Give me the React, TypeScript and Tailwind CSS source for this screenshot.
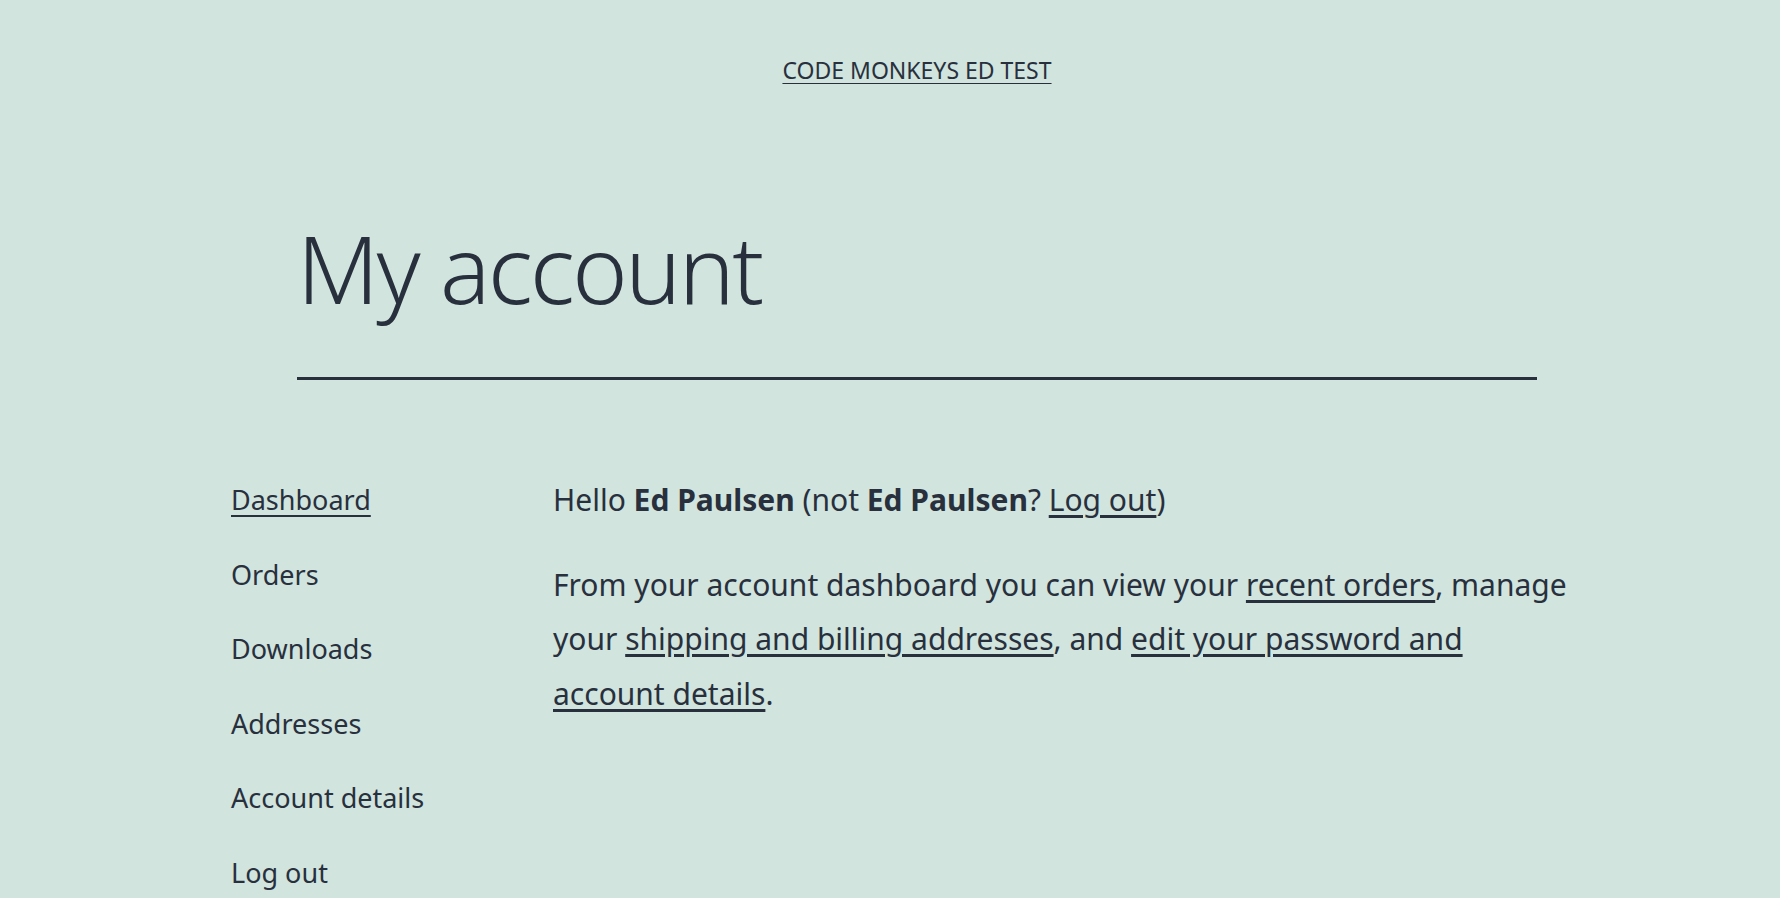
const navItems = ["Dashboard", "Orders", "Downloads", "Addresses", "Account details", "Log out"];

export default function App() {
  return (
    <div className="min-h-[898px] bg-[#d1e4dd] text-[#28303d] font-['Noto_Sans',sans-serif] overflow-hidden">
      <header className="pt-[53px] flex justify-center pl-[54px]">
        <a href="#" className="text-[23px] leading-[34px] underline underline-offset-[4px] decoration-1">
          CODE MONKEYS ED TEST
        </a>
      </header>

      <div className="ml-[297px] w-[1240px] mt-[130px]">
        <h1 className="text-[94px] leading-[1.1] font-light tracking-[-2.5px]">My account</h1>
        <hr className="mt-[57px] border-0 h-[3px] bg-[#28303d]" />
      </div>

      <div className="ml-[231px] mt-[80px] flex items-start">
        <nav className="w-[322px] shrink-0 pt-[3px]">
          <ul>
            {navItems.map((item, i) => (
              <li key={item} className="text-[27px] leading-[74.5px]">
                <a
                  href="#"
                  className={i === 0 ? "underline decoration-2 underline-offset-[5px]" : ""}
                >
                  {item}
                </a>
              </li>
            ))}
          </ul>
        </nav>

        <div className="mt-[13px] w-[1020px] text-[30px] leading-[54.5px]">
          <p>
            Hello <strong className="font-bold">Ed Paulsen</strong> (not{" "}
            <strong className="font-bold">Ed Paulsen</strong>?{" "}
            <a href="#" className="underline underline-offset-[4px]">Log out</a>)
          </p>
          <p className="mt-[30px]">
            From your account dashboard you can view your{" "}
            <a href="#" className="underline underline-offset-[4px]">recent orders</a>, manage your{" "}
            <a href="#" className="underline underline-offset-[4px]">shipping and billing addresses</a>, and{" "}
            <a href="#" className="underline underline-offset-[4px]">edit your password and account details</a>.
          </p>
        </div>
      </div>
    </div>
  );
}
